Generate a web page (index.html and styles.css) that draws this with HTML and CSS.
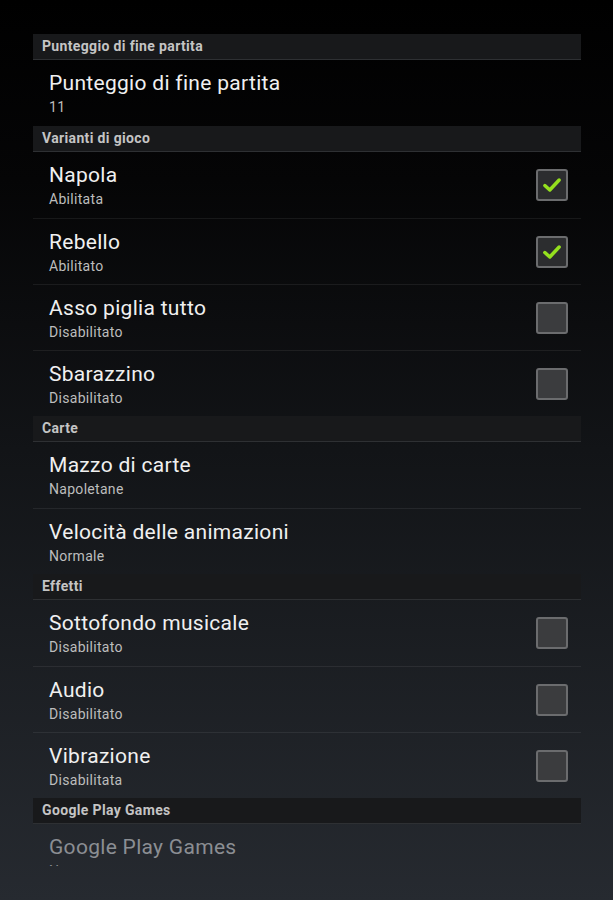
FILE: index.html
```html
<!DOCTYPE html>
<html lang="it">
<head>
    <meta charset="UTF-8">
    <meta name="viewport" content="width=device-width, initial-scale=1.0">
    <title>Impostazioni</title>
    <link rel="stylesheet" href="styles.css">
</head>
<body>

<div class="lista">
    <div class="categoria">Punteggio di fine partita</div>
    <div class="voce">
        <div class="testi">
            <div class="titolo">Punteggio di fine partita</div>
            <div class="sommario">11</div>
        </div>
    </div>

    <div class="categoria">Varianti di gioco</div>
    <div class="voce">
        <div class="testi">
            <div class="titolo">Napola</div>
            <div class="sommario">Abilitata</div>
        </div>
        <span class="check attivo"><svg viewBox="0 0 20 20"><path d="M3.5 10.5 L8 14.5 L16.5 5.5"/></svg></span>
    </div>
    <div class="voce">
        <div class="testi">
            <div class="titolo">Rebello</div>
            <div class="sommario">Abilitato</div>
        </div>
        <span class="check attivo"><svg viewBox="0 0 20 20"><path d="M3.5 10.5 L8 14.5 L16.5 5.5"/></svg></span>
    </div>
    <div class="voce">
        <div class="testi">
            <div class="titolo">Asso piglia tutto</div>
            <div class="sommario">Disabilitato</div>
        </div>
        <span class="check"></span>
    </div>
    <div class="voce">
        <div class="testi">
            <div class="titolo">Sbarazzino</div>
            <div class="sommario">Disabilitato</div>
        </div>
        <span class="check"></span>
    </div>

    <div class="categoria">Carte</div>
    <div class="voce">
        <div class="testi">
            <div class="titolo">Mazzo di carte</div>
            <div class="sommario">Napoletane</div>
        </div>
    </div>
    <div class="voce">
        <div class="testi">
            <div class="titolo">Velocità delle animazioni</div>
            <div class="sommario">Normale</div>
        </div>
    </div>

    <div class="categoria">Effetti</div>
    <div class="voce">
        <div class="testi">
            <div class="titolo">Sottofondo musicale</div>
            <div class="sommario">Disabilitato</div>
        </div>
        <span class="check"></span>
    </div>
    <div class="voce">
        <div class="testi">
            <div class="titolo">Audio</div>
            <div class="sommario">Disabilitato</div>
        </div>
        <span class="check"></span>
    </div>
    <div class="voce">
        <div class="testi">
            <div class="titolo">Vibrazione</div>
            <div class="sommario">Disabilitata</div>
        </div>
        <span class="check"></span>
    </div>

    <div class="categoria">Google Play Games</div>
    <div class="voce disabilitata">
        <div class="testi">
            <div class="titolo">Google Play Games</div>
            <div class="sommario">Non connesso</div>
        </div>
    </div>
</div>

</body>
</html>
```

FILE: styles.css
```css
html {
    height: 100%;
}
body {
    margin: 0;
    min-height: 100%;
    background: linear-gradient(#000000 0%, #050506 20%, #121417 50%, #262a30 100%);
    font-family: Roboto, "Noto Sans", sans-serif;
    color: #f0f0f0;
    overflow: hidden;
}
.lista {
    width: 548px;
    margin: 34px 0 0 33px;
    height: 832px;
    overflow: hidden;
}
.categoria {
    height: 25px;
    line-height: 25px;
    padding-left: 9px;
    background-color: #18191b;
    border-bottom: 1px solid #2e3033;
    font-size: 14px;
    letter-spacing: 0.35px;
    font-weight: bold;
    color: #c4c4c4;
}
.voce {
    display: flex;
    align-items: center;
    height: 66px;
    box-sizing: border-box;
    padding: 0 13px 0 16px;
}
.voce + .voce {
    border-top: 1px solid rgba(255, 255, 255, 0.07);
}
.testi {
    flex: 1;
}
.titolo {
    font-size: 21px;
    letter-spacing: 0.3px;
    line-height: 24px;
}
.sommario {
    font-size: 14px;
    letter-spacing: 0.3px;
    line-height: 16px;
    margin-top: 4px;
    color: #bdbdbd;
}
.disabilitata .titolo,
.disabilitata .sommario {
    color: #8b8e93;
}
.check {
    width: 28px;
    height: 28px;
    border: 2px solid #6b6c6e;
    border-radius: 3px;
    background-color: #3b3c3e;
    box-sizing: content-box;
    display: flex;
    align-items: center;
    justify-content: center;
}
.check.attivo {
    background-color: #2c2d2f;
}
.check svg {
    width: 22px;
    height: 22px;
    fill: none;
    stroke: #94e01e;
    stroke-width: 3.2;
    stroke-linecap: round;
    stroke-linejoin: round;
}
```
